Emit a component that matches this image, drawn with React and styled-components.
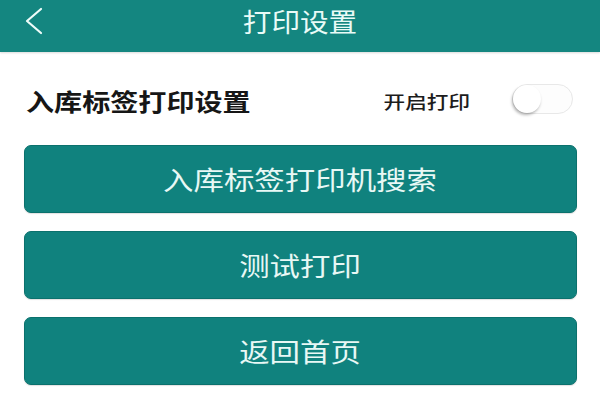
import React, { useState } from 'react';
import styled, { createGlobalStyle } from 'styled-components';

const GlobalStyle = createGlobalStyle`
    html, body {
        margin: 0;
        padding: 0;
        background: #ffffff;
    }
    body {
        font-family: "Noto Sans CJK SC", "Noto Sans", sans-serif;
    }
`;

const Page = styled.div`
    width: 600px;
    height: 400px;
    display: flex;
    flex-direction: column;
    background: #fff;
    overflow: hidden;
`;

const Header = styled.header`
    height: 52px;
    box-sizing: border-box;
    padding-bottom: 10px;
    flex-shrink: 0;
    display: grid;
    grid-template-columns: 1fr auto 1fr;
    align-items: center;
    background: #148680;
    box-shadow: 0 1px 2px rgba(0, 0, 0, 0.15);
`;

const BackButton = styled.button`
    justify-self: start;
    display: flex;
    align-items: center;
    margin-left: 23px;
    padding: 0;
    border: none;
    background: none;
    cursor: pointer;
`;

// the screenshot is a little wider than tall, so text gets a small horizontal stretch
const Stretch = styled.span`
    display: inline-block;
    white-space: nowrap;
    transform: scaleX(${p => p.$x || 1});
    transform-origin: ${p => p.$origin || 'center'};
`;

const Title = styled.h1`
    margin: 0;
    font-size: 26px;
    font-weight: 400;
    line-height: 1;
    color: #e9fbf7;
`;

const SettingRow = styled.div`
    height: 93px;
    box-sizing: border-box;
    padding: 4px 27px 0 26px;
    display: flex;
    align-items: center;
    justify-content: space-between;
`;

const Label = styled.div`
    font-size: 24px;
    font-weight: 700;
    color: #161616;
    line-height: 1;
`;

const SwitchGroup = styled.div`
    display: flex;
    align-items: center;
    gap: 42px;
`;

const SwitchLabel = styled.span`
    font-size: 18px;
    font-weight: 500;
    color: #1c1c1c;
    line-height: 1;
    margin-top: 1px;
`;

const Track = styled.button`
    position: relative;
    width: 61px;
    height: 30px;
    padding: 0;
    border-radius: 15px;
    border: 1px solid #e8e8e8;
    background: ${p => (p.$on ? '#12847f' : '#fdfdfd')};
    cursor: pointer;
    margin-top: -4px;
`;

const Knob = styled.span`
    position: absolute;
    top: 0;
    left: ${p => (p.$on ? '31px' : '0')};
    width: 28px;
    height: 28px;
    border-radius: 50%;
    background: #fff;
    box-shadow: -1px 2px 3px rgba(0, 0, 0, 0.3);
`;

const ButtonList = styled.div`
    display: flex;
    flex-direction: column;
    gap: 18px;
    padding: 0 23px 0 24px;
`;

const ActionButton = styled.button`
    height: 68px;
    width: 100%;
    border: 1px solid #0b716d;
    border-radius: 7px;
    background: #10827e;
    color: #e8f8f5;
    font-family: inherit;
    font-size: 26px;
    font-weight: 400;
    line-height: 1;
    display: flex;
    align-items: center;
    justify-content: center;
    cursor: pointer;
    box-shadow: 0 1px 1px rgba(0, 0, 0, 0.12);
`;

const actions = ['入库标签打印机搜索', '测试打印', '返回首页'];

function ChevronLeft() {
    return (
        <svg width="20" height="28" viewBox="0 0 20 28" fill="none">
            <polyline points="18,2 4,14 18,26" stroke="#eefcf9" strokeWidth="2.2" strokeLinecap="round" strokeLinejoin="round" />
        </svg>
    );
}

export default function App() {
    const [printOn, setPrintOn] = useState(false);

    return (
        <>
            <GlobalStyle />
            <Page>
                <Header>
                    <BackButton aria-label="返回">
                        <ChevronLeft />
                    </BackButton>
                    <Title><Stretch $x={1.1}>打印设置</Stretch></Title>
                    <span />
                </Header>

                <SettingRow>
                    <Label><Stretch $x={1.17} $origin="left">入库标签打印设置</Stretch></Label>
                    <SwitchGroup>
                        <SwitchLabel><Stretch $x={1.2} $origin="right">开启打印</Stretch></SwitchLabel>
                        <Track $on={printOn} onClick={() => setPrintOn(!printOn)}>
                            <Knob $on={printOn} />
                        </Track>
                    </SwitchGroup>
                </SettingRow>

                <ButtonList>
                    {actions.map(text => (
                        <ActionButton key={text}>
                            <Stretch $x={1.17}>{text}</Stretch>
                        </ActionButton>
                    ))}
                </ButtonList>
            </Page>
        </>
    );
}
